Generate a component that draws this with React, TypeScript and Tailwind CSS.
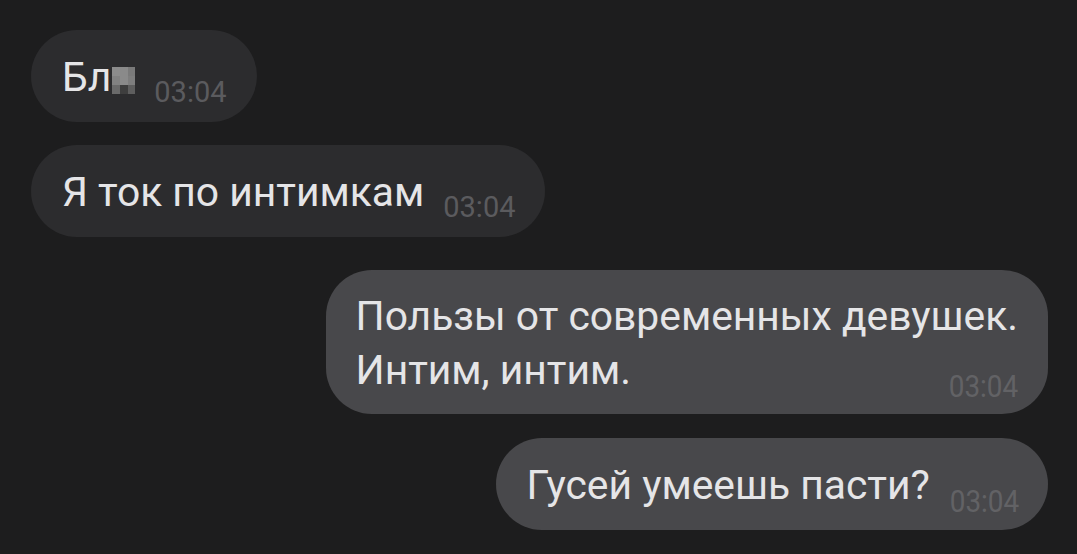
import React from 'react';

const font = { fontFamily: 'Roboto, "Liberation Sans", sans-serif' };

function Time({ out, shift = 'translate-y-[5px]' }: { out?: boolean; shift?: string }) {
  return (
    <span
      className={`shrink-0 leading-none ${shift} ${
        out
          ? 'ml-[12px] origin-right scale-x-[0.9] text-[31px] text-[#626265]'
          : 'ml-[19px] text-[29px] text-[#5b5b5e]'
      }`}
    >
      03:04
    </span>
  );
}

function Censored() {
  const cells = ['#8c8c8c', '#8a8a8a', '#7a7a7a', '#828282', '#8a8a8a', '#7e7e7e', '#6a6a6a', '#3e3e3e', '#5e5e5e'];
  return (
    <span className="ml-[1px] inline-grid h-[27px] w-[23px] translate-y-[3px] grid-cols-3 grid-rows-3">
      {cells.map((c, i) => (
        <span key={i} style={{ background: c }} />
      ))}
    </span>
  );
}

export default function App() {
  return (
    <div className="min-h-[554px] w-full bg-[#1d1d1e] pl-[31px] pr-[29px] pt-[30px]" style={font}>
      <div className="flex flex-col text-[40.8px] leading-[50px] text-[#e5e5e7]">
        {/* incoming */}
        <div className="flex items-end self-start rounded-[46px] bg-[#2c2c2e] pb-[20px] pl-[31px] pr-[30px] pt-[22px]">
          <span className="flex items-center">
            Бл
            <Censored />
          </span>
          <Time />
        </div>
        <div className="mt-[23px] flex items-end self-start rounded-[46px] bg-[#2c2c2e] pb-[20px] pl-[31px] pr-[30px] pt-[22px]">
          <span>Я ток по интимкам</span>
          <Time />
        </div>

        {/* outgoing */}
        <div className="mt-[33px] flex flex-col self-end rounded-[46px] bg-[#48484b] pb-[17px] pl-[30px] pr-[30px] pt-[19px] leading-[54px]">
          <span className="whitespace-nowrap">Пользы от современных девушек.</span>
          <div className="flex items-end justify-between">
            <span>Интим, интим.</span>
            <Time out shift="translate-y-[5px]" />
          </div>
        </div>
        <div className="mt-[24px] flex items-end self-end rounded-[46px] bg-[#48484b] pb-[20px] pl-[31px] pr-[29px] pt-[22px]">
          <span>Гусей умеешь пасти?</span>
          <Time out shift="translate-y-[7px]" />
        </div>
      </div>
    </div>
  );
}
